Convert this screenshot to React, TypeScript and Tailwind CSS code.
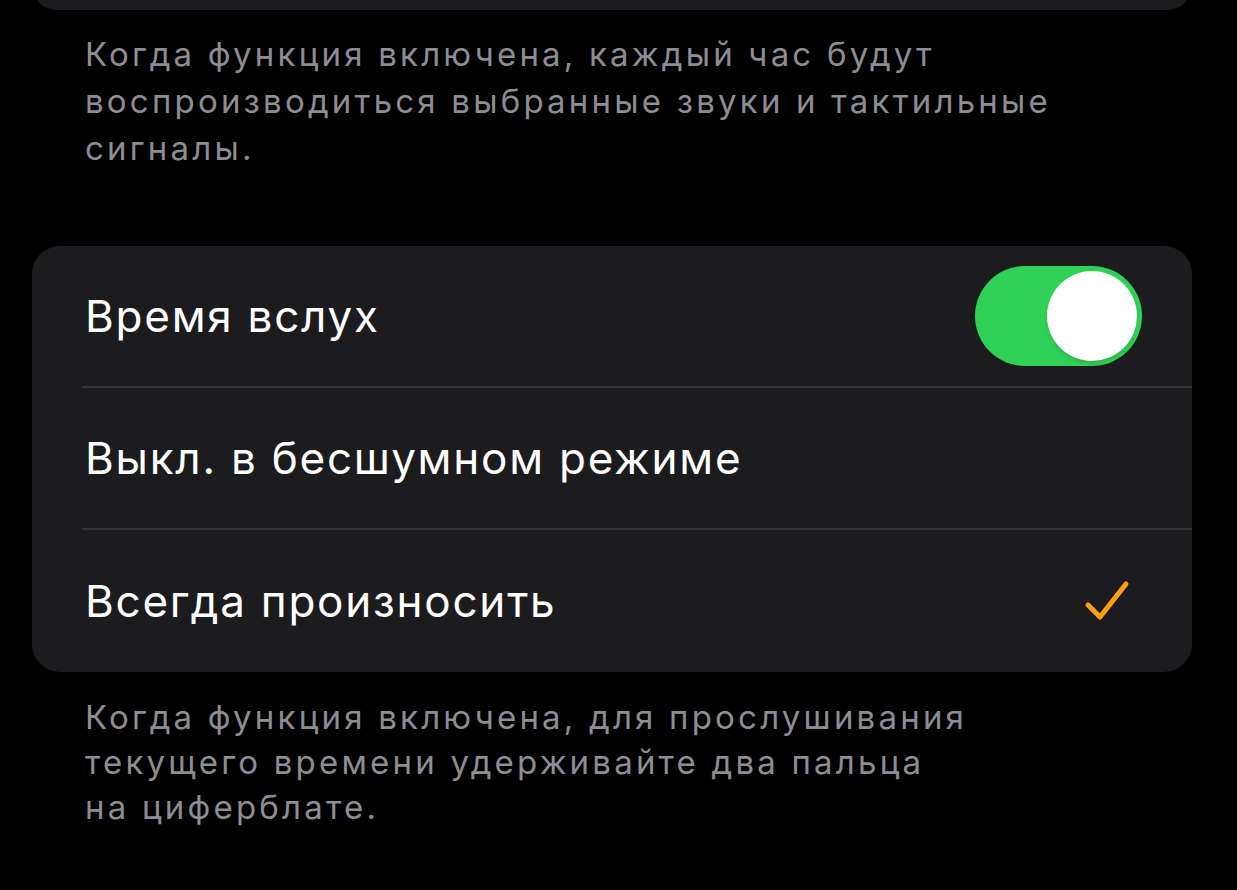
import React from "react"

const font = { fontFamily: "Inter, 'Noto Sans', sans-serif" }

function Toggle({ on }: { on: boolean }) {
  return (
    <div
      className={`flex h-[100px] w-[167px] items-center rounded-full p-[5px] ${
        on ? "justify-end bg-[#30d158]" : "justify-start bg-[#39393d]"
      }`}
    >
      <div className="h-[90px] w-[90px] rounded-full bg-white shadow-md" />
    </div>
  )
}

function Check() {
  return (
    <svg width="46" height="46" viewBox="0 0 46 46" fill="none" className="mr-[12px]">
      <path
        d="M4 27 L16 39 L42 6"
        stroke="#ff9f0a"
        strokeWidth="5"
        strokeLinecap="round"
        strokeLinejoin="round"
      />
    </svg>
  )
}

function Row({
  label,
  right,
  last,
}: {
  label: string
  right?: React.ReactNode
  last?: boolean
}) {
  return (
    <div className="pl-[50px]">
      <div
        className={`flex h-[142px] items-center justify-between pl-[3px] pr-[50px] ${
          last ? "" : "border-b-2 border-[#323234]"
        }`}
      >
        <span className="text-[44px] tracking-[0.04em] text-white">{label}</span>
        {right}
      </div>
    </div>
  )
}

export default function App() {
  return (
    <div className="h-[890px] w-[1237px] overflow-hidden bg-black" style={font}>
      <div className="ml-[32px] mr-[45px] -mt-[40px] h-[50px] rounded-[28px] bg-[#1c1c1e]" />

      <p className="ml-[85px] mt-[21px] text-[33px] leading-[47px] tracking-[3.2px] text-[#8d8d93]">
        Когда функция включена, каждый час будут
        <br />
        воспроизводиться выбранные звуки и тактильные
        <br />
        сигналы.
      </p>

      <div className="ml-[32px] mr-[45px] mt-[74px] overflow-hidden rounded-[28px] bg-[#1c1c1e]">
        <Row label="Время вслух" right={<Toggle on />} />
        <Row label="Выкл. в бесшумном режиме" />
        <Row label="Всегда произносить" right={<Check />} last />
      </div>

      <p className="ml-[85px] mt-[23px] text-[33px] leading-[45px] tracking-[3.2px] text-[#8d8d93]">
        Когда функция включена, для прослушивания
        <br />
        текущего времени удерживайте два пальца
        <br />
        на циферблате.
      </p>
    </div>
  )
}
